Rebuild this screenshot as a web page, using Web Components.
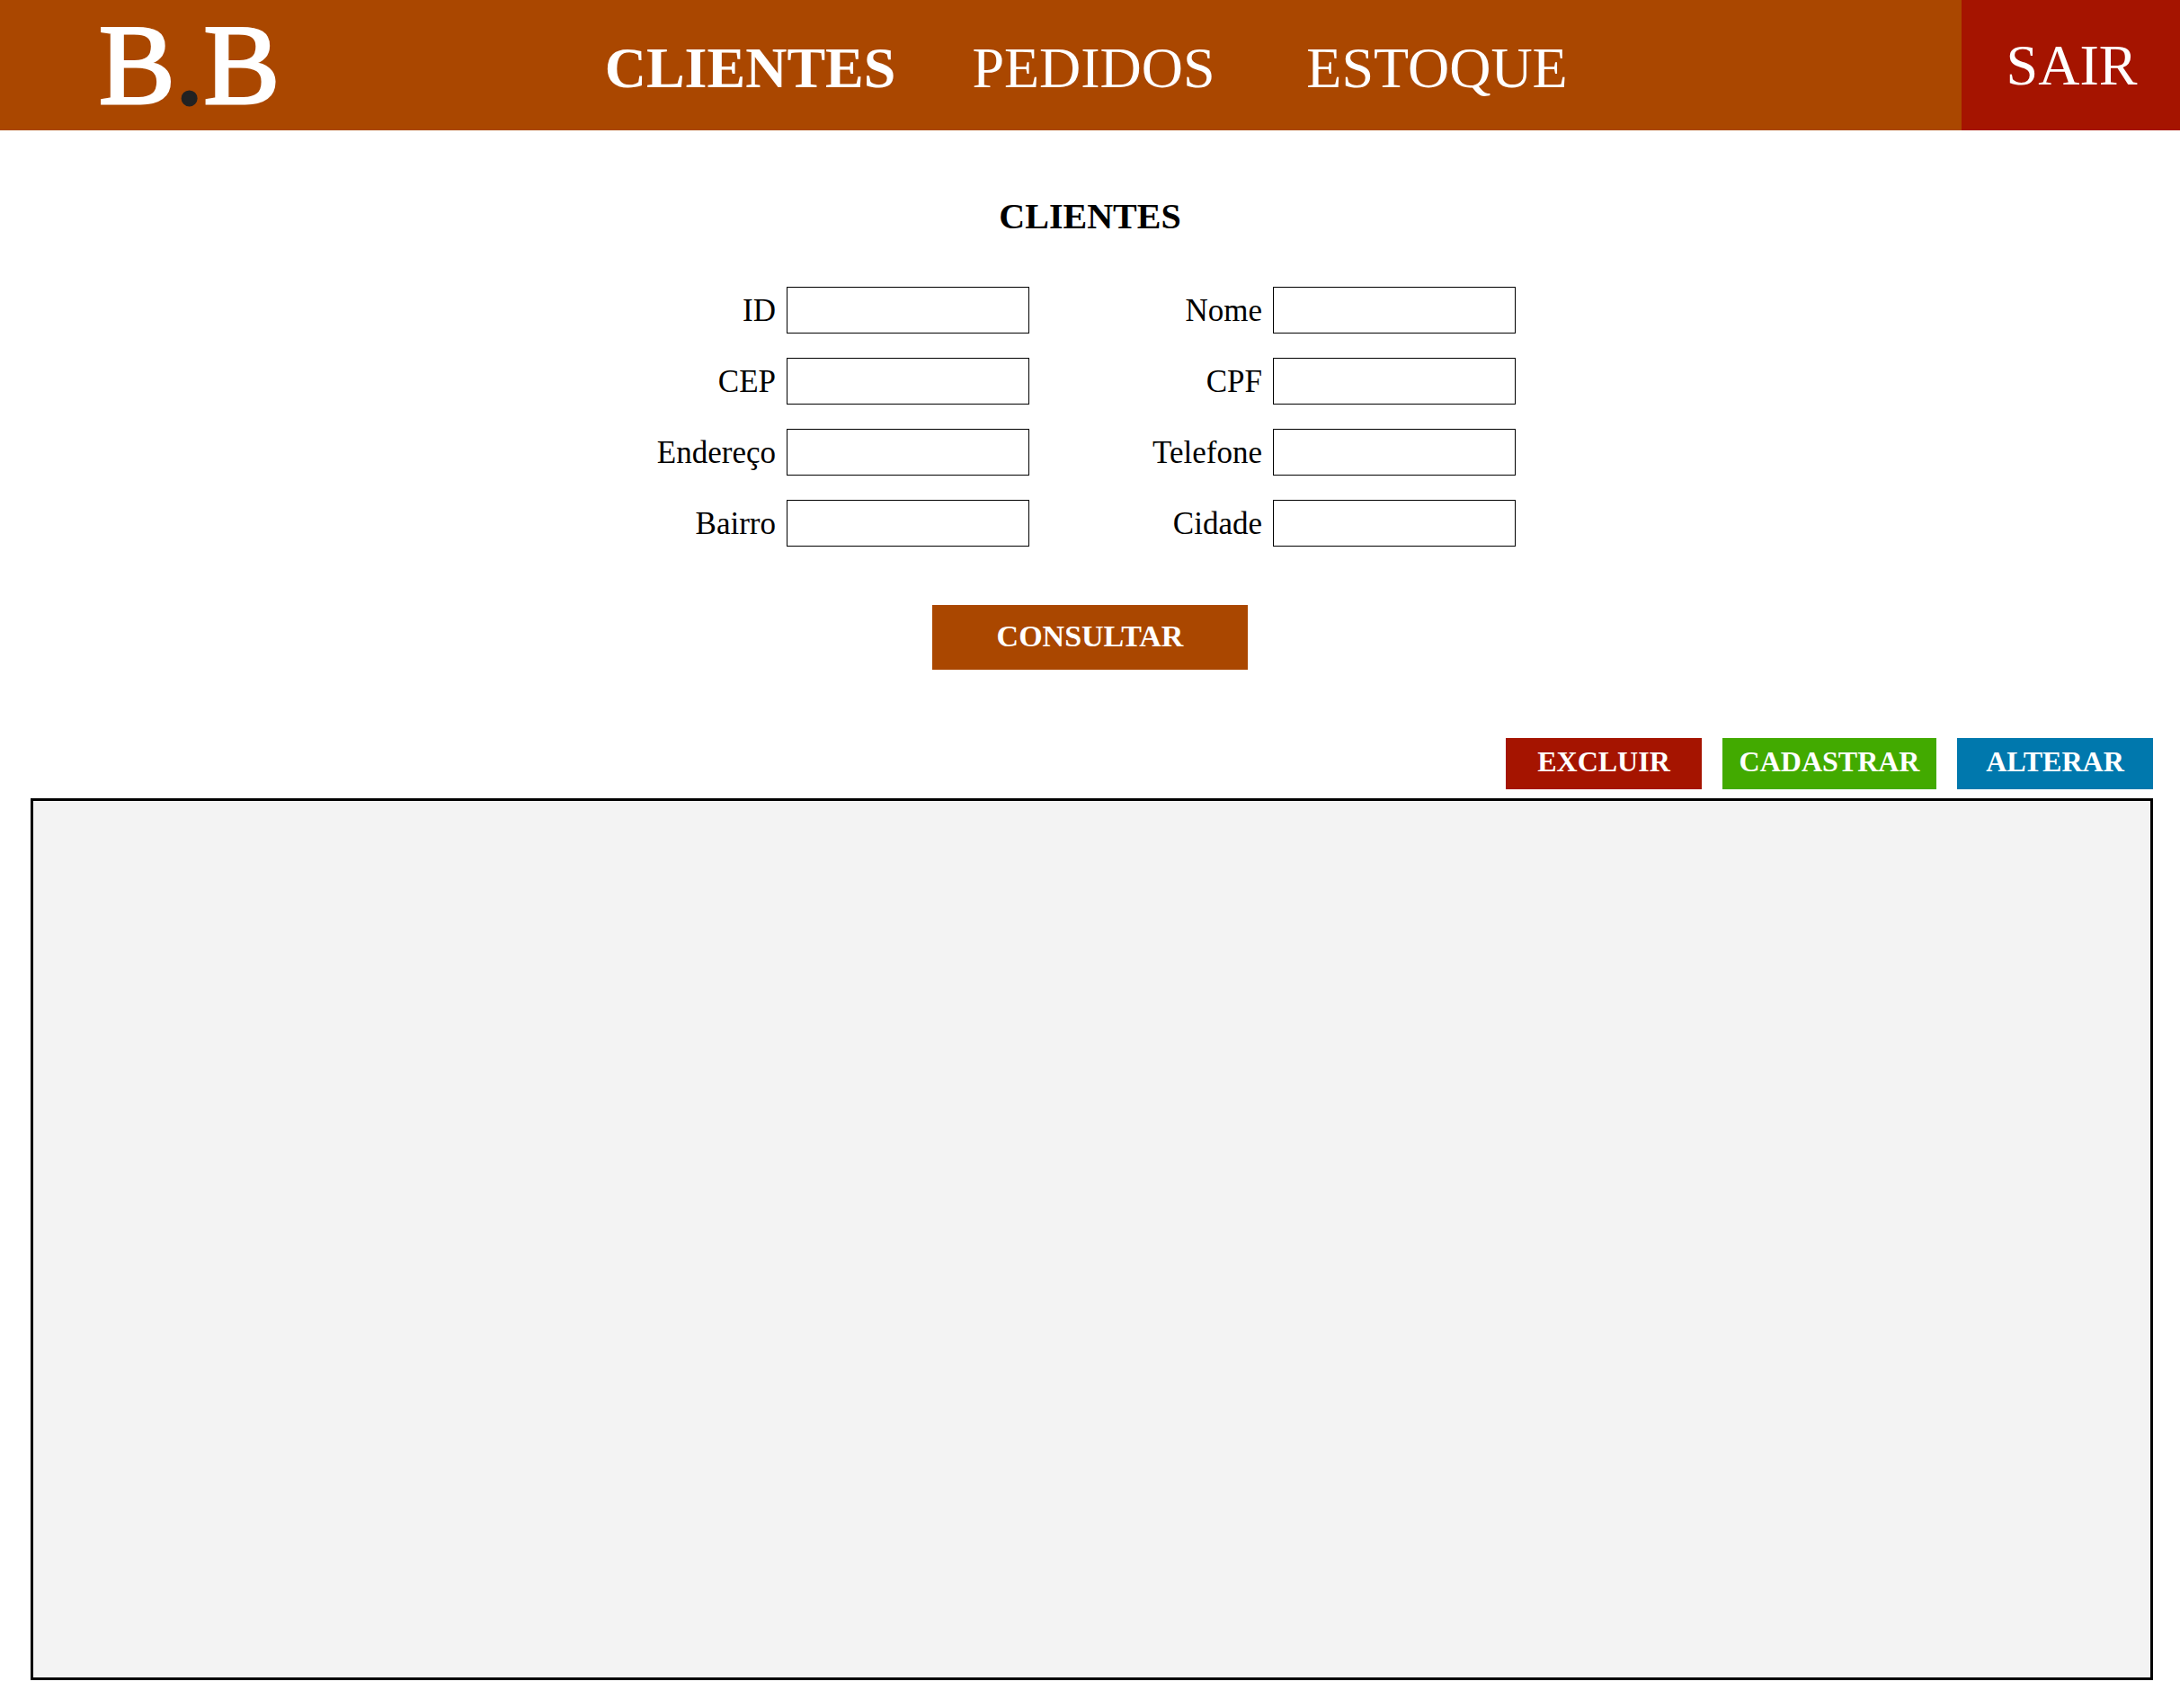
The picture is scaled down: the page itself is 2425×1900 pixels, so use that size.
<!DOCTYPE html>
<html lang="pt-BR">
<head>
<meta charset="utf-8">
<meta name="viewport" content="width=device-width, initial-scale=1">
<title>B.B - Clientes</title>
<style>
  body { margin: 0; background: #fff; color: #000; font-family: "Liberation Serif", "Times New Roman", serif; }
</style>
</head>
<body>
<bb-app></bb-app>

<template id="bb-app">
  <style>
    :host { display: flex; flex-direction: column; min-height: 100vh; }
    main { flex: 1; display: flex; flex-direction: column; padding: 73px 30px 31px 34px; }
    .search { display: flex; flex-direction: column; align-items: center; margin-right: 4px; }
    h1 { margin: 0 0 55px; font-size: 40px; line-height: 46px; }
    .fields { display: grid; grid-template-columns: 414px 414px; column-gap: 127px; row-gap: 27px; padding-right: 8px; margin-bottom: 65px; }
    .actions { display: flex; justify-content: flex-end; gap: 23px; margin-top: 76px; margin-bottom: 10px; }
  </style>
  <bb-header>
    <bb-nav-link href="#clientes" current>CLIENTES</bb-nav-link>
    <bb-nav-link href="#pedidos">PEDIDOS</bb-nav-link>
    <bb-nav-link href="#estoque">ESTOQUE</bb-nav-link>
  </bb-header>
  <main>
    <section class="search">
      <h1>CLIENTES</h1>
      <div class="fields">
        <bb-field name="id">ID</bb-field>
        <bb-field name="nome">Nome</bb-field>
        <bb-field name="cep">CEP</bb-field>
        <bb-field name="cpf">CPF</bb-field>
        <bb-field name="endereco">Endereço</bb-field>
        <bb-field name="telefone">Telefone</bb-field>
        <bb-field name="bairro">Bairro</bb-field>
        <bb-field name="cidade">Cidade</bb-field>
      </div>
      <bb-button kind="search">CONSULTAR</bb-button>
    </section>
    <div class="actions">
      <bb-button kind="delete">EXCLUIR</bb-button>
      <bb-button kind="create">CADASTRAR</bb-button>
      <bb-button kind="update">ALTERAR</bb-button>
    </div>
    <bb-results></bb-results>
  </main>
</template>

<template id="bb-header">
  <style>
    :host { display: block; }
    header { display: grid; grid-template-columns: 1fr auto 1fr; align-items: stretch; height: 145px; background: #aa4700; color: #fff; }
    .logo { justify-self: start; align-self: center; padding-left: 110px; font-size: 127px; line-height: 145px; color: inherit; text-decoration: none; -webkit-text-stroke: 3px currentColor; }
    .logo span { color: #222; }
    nav { display: grid; grid-template-columns: repeat(3, 382px); align-items: center; padding: 6px 0 0 8px; }
    button { justify-self: end; width: 243px; border: 0; padding: 0 0 0 2px; background: #a51400; color: #fff; font: 64px/74px "Liberation Serif", "Times New Roman", serif; cursor: pointer; }
  </style>
  <header>
    <a class="logo" href="#inicio">B<span>.</span>B</a>
    <nav><slot></slot></nav>
    <button type="button">SAIR</button>
  </header>
</template>

<template id="bb-nav-link">
  <style>
    :host { display: block; text-align: center; font-size: 64px; line-height: 74px; }
    :host([current]) { font-weight: bold; }
    a { color: inherit; text-decoration: none; }
  </style>
  <a><slot></slot></a>
</template>

<template id="bb-field">
  <style>
    :host { display: flex; align-items: center; justify-content: flex-end; gap: 12px; }
    label { padding-top: 2px; font-size: 35px; line-height: 40px; white-space: nowrap; }
    input { box-sizing: border-box; width: 270px; height: 52px; padding: 0 10px; border: 1px solid #000; border-radius: 0; background: #fff; color: #000; font: 35px/40px "Liberation Serif", "Times New Roman", serif; }
  </style>
  <label for="input"><slot></slot></label>
  <input id="input" type="text">
</template>

<template id="bb-button">
  <style>
    :host { display: block; --bg: #a51400; --w: 218px; --h: 57px; --size: 32px; --lift: 6px; }
    :host([kind="search"]) { --bg: #aa4700; --w: 351px; --h: 72px; --size: 34px; --lift: 2px; }
    :host([kind="create"]) { --bg: #42aa00; --w: 238px; }
    :host([kind="update"]) { --bg: #0078ad; }
    button { display: block; box-sizing: border-box; width: var(--w); height: var(--h); padding: 0 0 var(--lift); border: 0; background: var(--bg); color: #fff; font: bold var(--size)/36px "Liberation Serif", "Times New Roman", serif; cursor: pointer; }
  </style>
  <button type="button"><slot></slot></button>
</template>

<template id="bb-results">
  <style>
    :host { display: block; flex: 1; box-sizing: border-box; min-height: 300px; border: 3px solid #000; background: #f3f3f3; }
  </style>
  <slot></slot>
</template>

<script>
  class BaseElement extends HTMLElement {
    constructor() {
      super();
      const template = document.getElementById(this.localName);
      this.attachShadow({ mode: "open" }).append(template.content.cloneNode(true));
    }
  }
  class BbApp extends BaseElement {}
  class BbHeader extends BaseElement {}
  class BbButton extends BaseElement {}
  class BbResults extends BaseElement {}
  class BbNavLink extends BaseElement {
    connectedCallback() {
      const link = this.shadowRoot.querySelector("a");
      link.href = this.getAttribute("href");
      if (this.hasAttribute("current")) link.setAttribute("aria-current", "page");
    }
  }
  class BbField extends BaseElement {
    connectedCallback() {
      this.shadowRoot.querySelector("input").name = this.getAttribute("name");
    }
  }
  customElements.define("bb-nav-link", BbNavLink);
  customElements.define("bb-field", BbField);
  customElements.define("bb-button", BbButton);
  customElements.define("bb-results", BbResults);
  customElements.define("bb-header", BbHeader);
  customElements.define("bb-app", BbApp);
</script>
</body>
</html>
